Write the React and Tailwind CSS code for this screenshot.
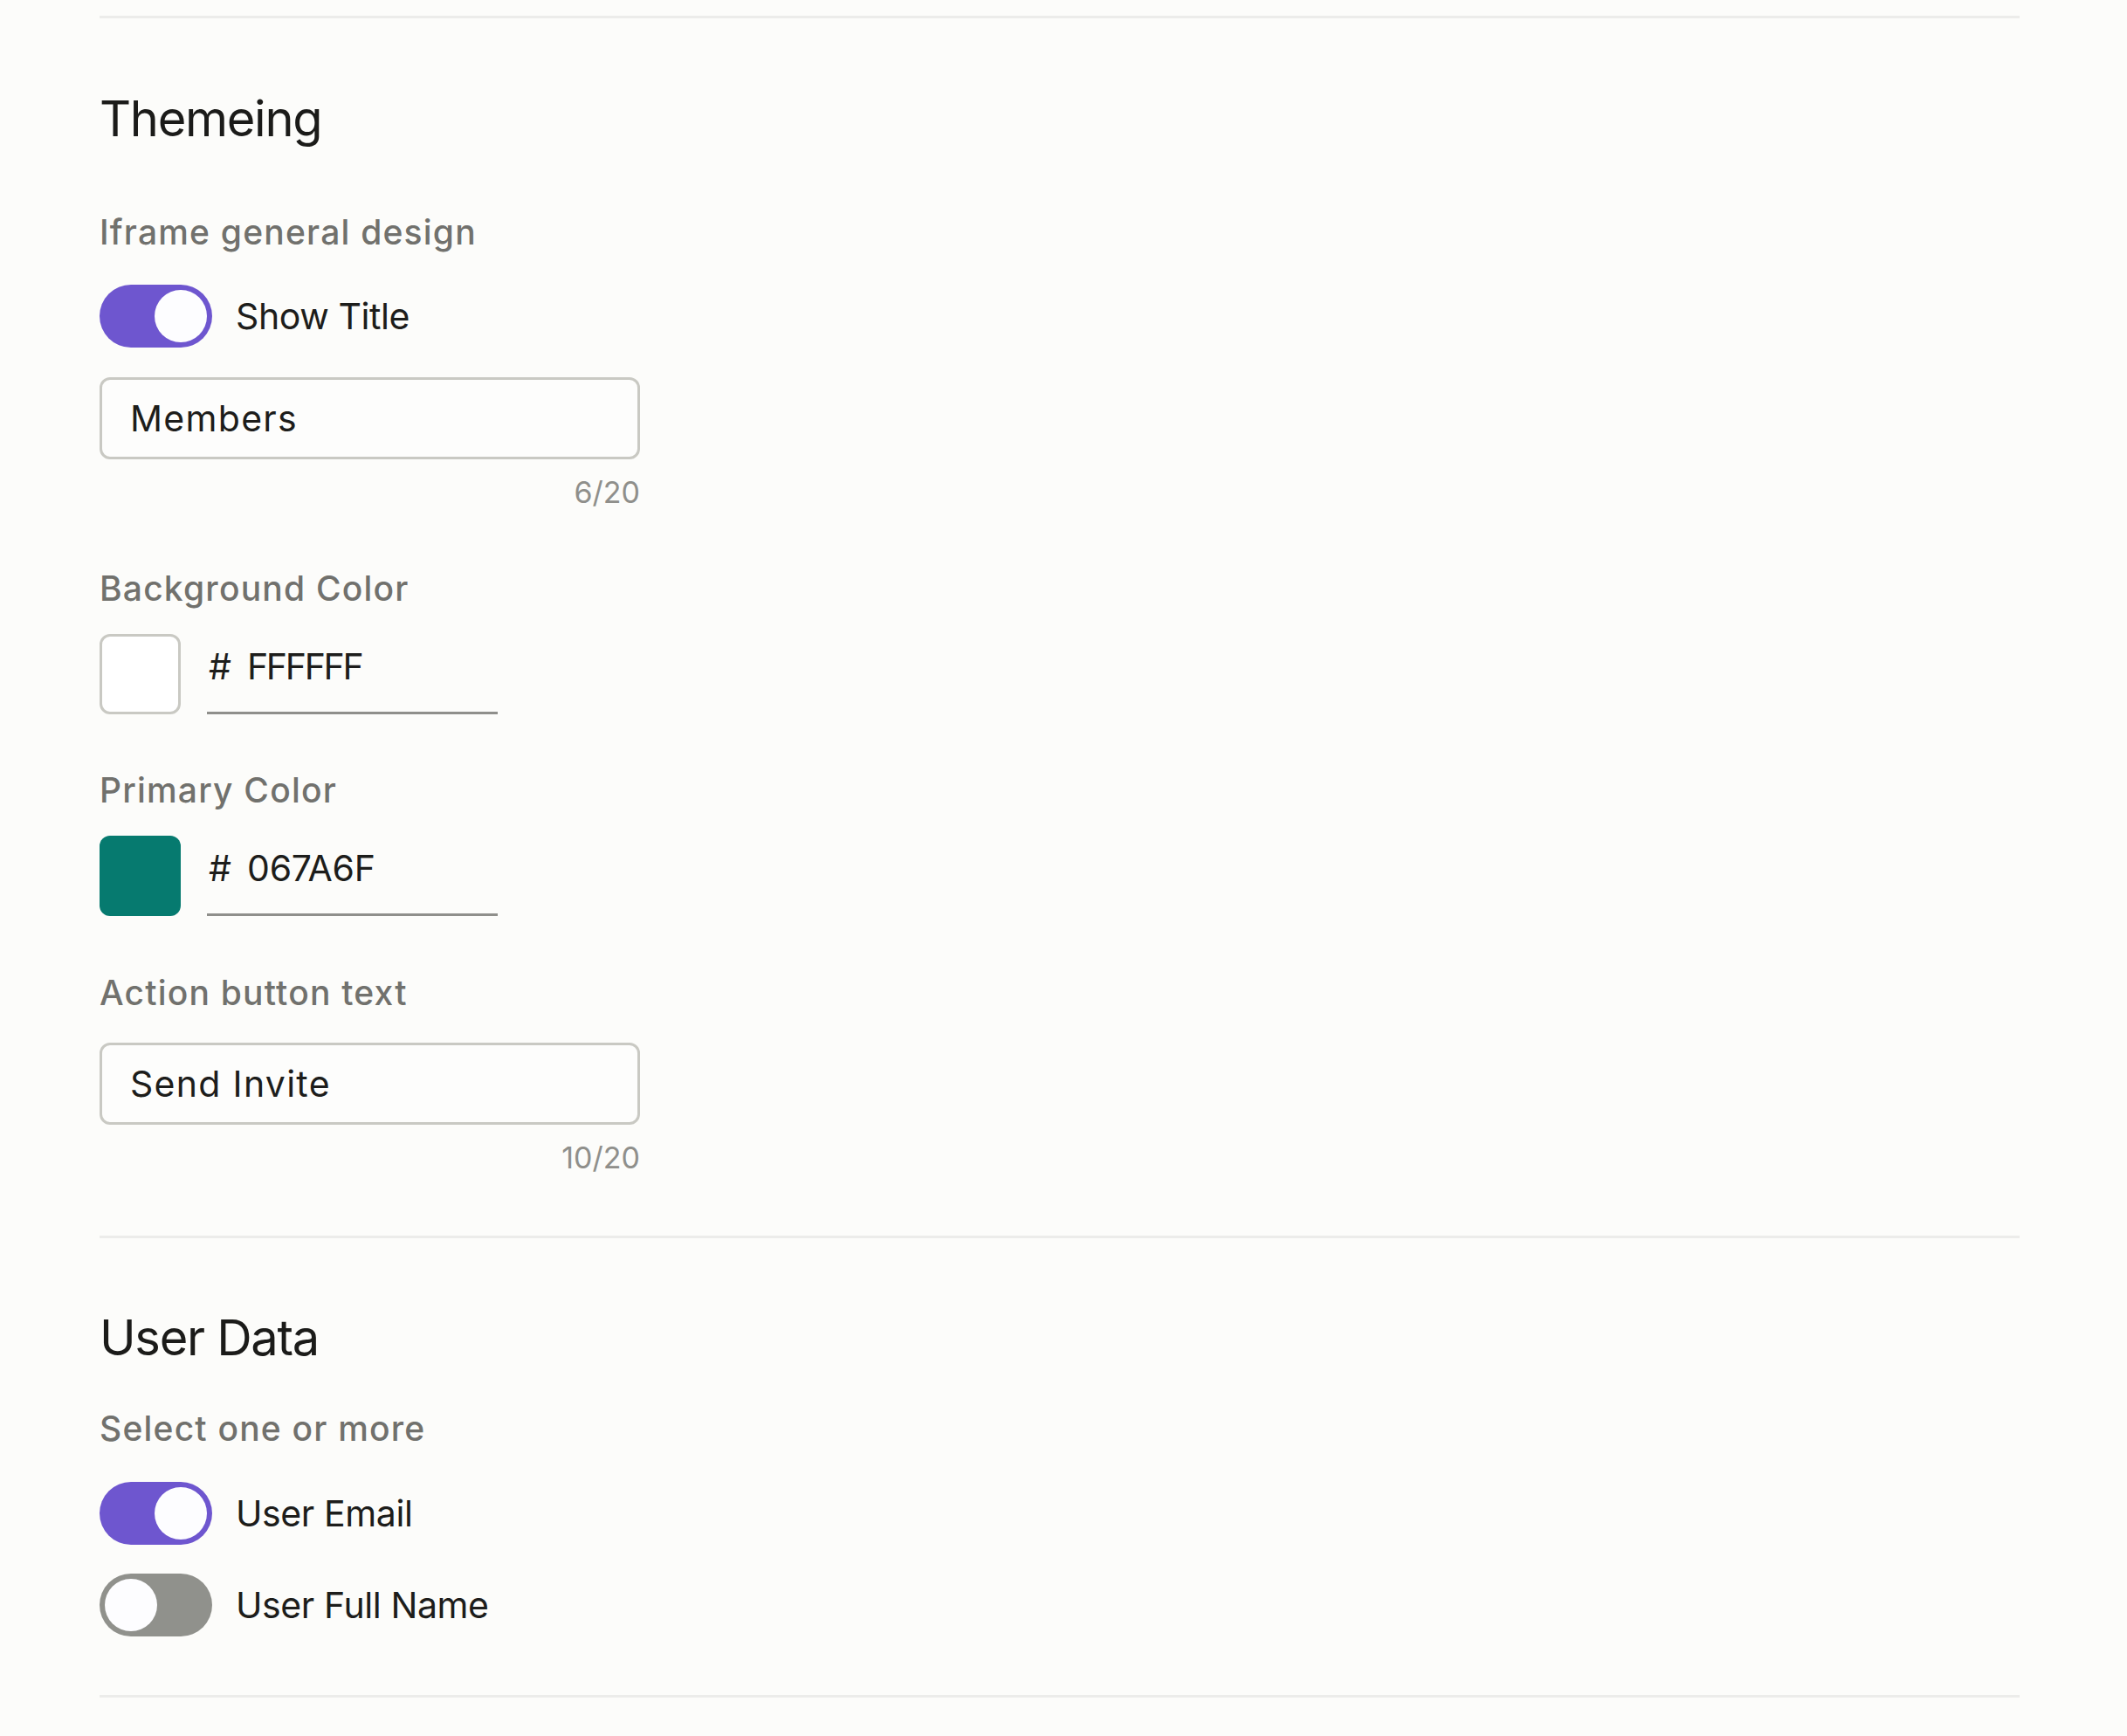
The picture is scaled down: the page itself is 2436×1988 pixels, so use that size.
import React from "react";

const FONT = { fontFamily: "Inter, 'Noto Sans', sans-serif" };

function Toggle({ on, label, className = "" }) {
  return (
    <div className={"flex items-center h-[72px] " + className}>
      <div
        className={
          "relative w-[129px] h-[72px] rounded-full flex items-center px-[6px] " +
          (on ? "bg-[#6e56cf] justify-end" : "bg-[#90918c] justify-start")
        }
      >
        <div className="w-[60px] h-[60px] rounded-full bg-[#fdfdff]" />
      </div>
      <span className="ml-[27px] text-[41px] leading-[50px] tracking-[-0.4px] text-[#1d1d1b]">{label}</span>
    </div>
  );
}

function Label({ children, className = "" }) {
  return (
    <div className={"text-[39px] leading-[50px] font-medium tracking-[1.2px] text-[#71716d] " + className}>{children}</div>
  );
}

function Heading({ children, className = "" }) {
  return (
    <h2 className={"text-[56px] leading-[70px] tracking-[-1.3px] text-[#1b1b19] font-normal " + className}>{children}</h2>
  );
}

function TextInput({ value, count, className = "" }) {
  return (
    <div className={"w-[619px] " + className}>
      <div className="h-[94px] border-[3px] border-[#c9c9c3] rounded-[12px] flex items-center pl-[32px] bg-[#fdfdfc]">
        <span className="text-[41px] leading-[50px] tracking-[1.3px] text-[#1d1d1b]">{value}</span>
      </div>
      <div className="mt-[17px] text-right text-[34px] leading-[42px] text-[#8f8f8b]">{count}</div>
    </div>
  );
}

function ColorField({ hex, hexClass, bordered, className = "" }) {
  return (
    <div className={"flex items-start " + className}>
      <div
        className={
          "w-[93px] h-[92px] rounded-[12px] " +
          (bordered ? "border-[3px] border-[#c9c9c3] bg-white" : "bg-[#067a6f]")
        }
      />
      <div className="ml-[30px] w-[333px] h-[92px] border-b-[3px] border-[#8f8f8b] pt-[12px] pl-[2px] text-[41px] leading-[50px] text-[#1d1d1b]">
        <span>#</span>
        <span className={"ml-[18px] " + hexClass}>{hex}</span>
      </div>
    </div>
  );
}

export default function App() {
  return (
    <div className="min-h-screen w-full bg-[#fcfcfa] pl-[114px] pr-[123px] pb-[40px]" style={FONT}>
      <div className="pt-[18px]">
        <div className="h-[3px] bg-[#ececea]" />
      </div>

      <section className="pt-[80px]">
        <Heading>Themeing</Heading>
        <Label className="mt-[70px]">Iframe general design</Label>
        <Toggle on label="Show Title" className="mt-[35px]" />
        <TextInput value="Members" count="6/20" className="mt-[34px]" />

        <Label className="mt-[64px]">Background Color</Label>
        <ColorField bordered hex="FFFFFF" hexClass="tracking-[-2.3px]" className="mt-[27px]" />

        <Label className="mt-[62px]">Primary Color</Label>
        <ColorField hex="067A6F" hexClass="tracking-[-0.2px]" className="mt-[27px]" />

        <Label className="mt-[63px]">Action button text</Label>
        <TextInput value="Send Invite" count="10/20" className="mt-[32px]" />
      </section>

      <div className="mt-[68px] h-[3px] bg-[#ececea]" />

      <section className="pt-[79px]">
        <Heading>User Data</Heading>
        <Label className="mt-[44px]">Select one or more</Label>
        <Toggle on label="User Email" className="mt-[36px]" />
        <Toggle label="User Full Name" className="mt-[33px]" />
      </section>

      <div className="mt-[67px] h-[3px] bg-[#ececea]" />
    </div>
  );
}
